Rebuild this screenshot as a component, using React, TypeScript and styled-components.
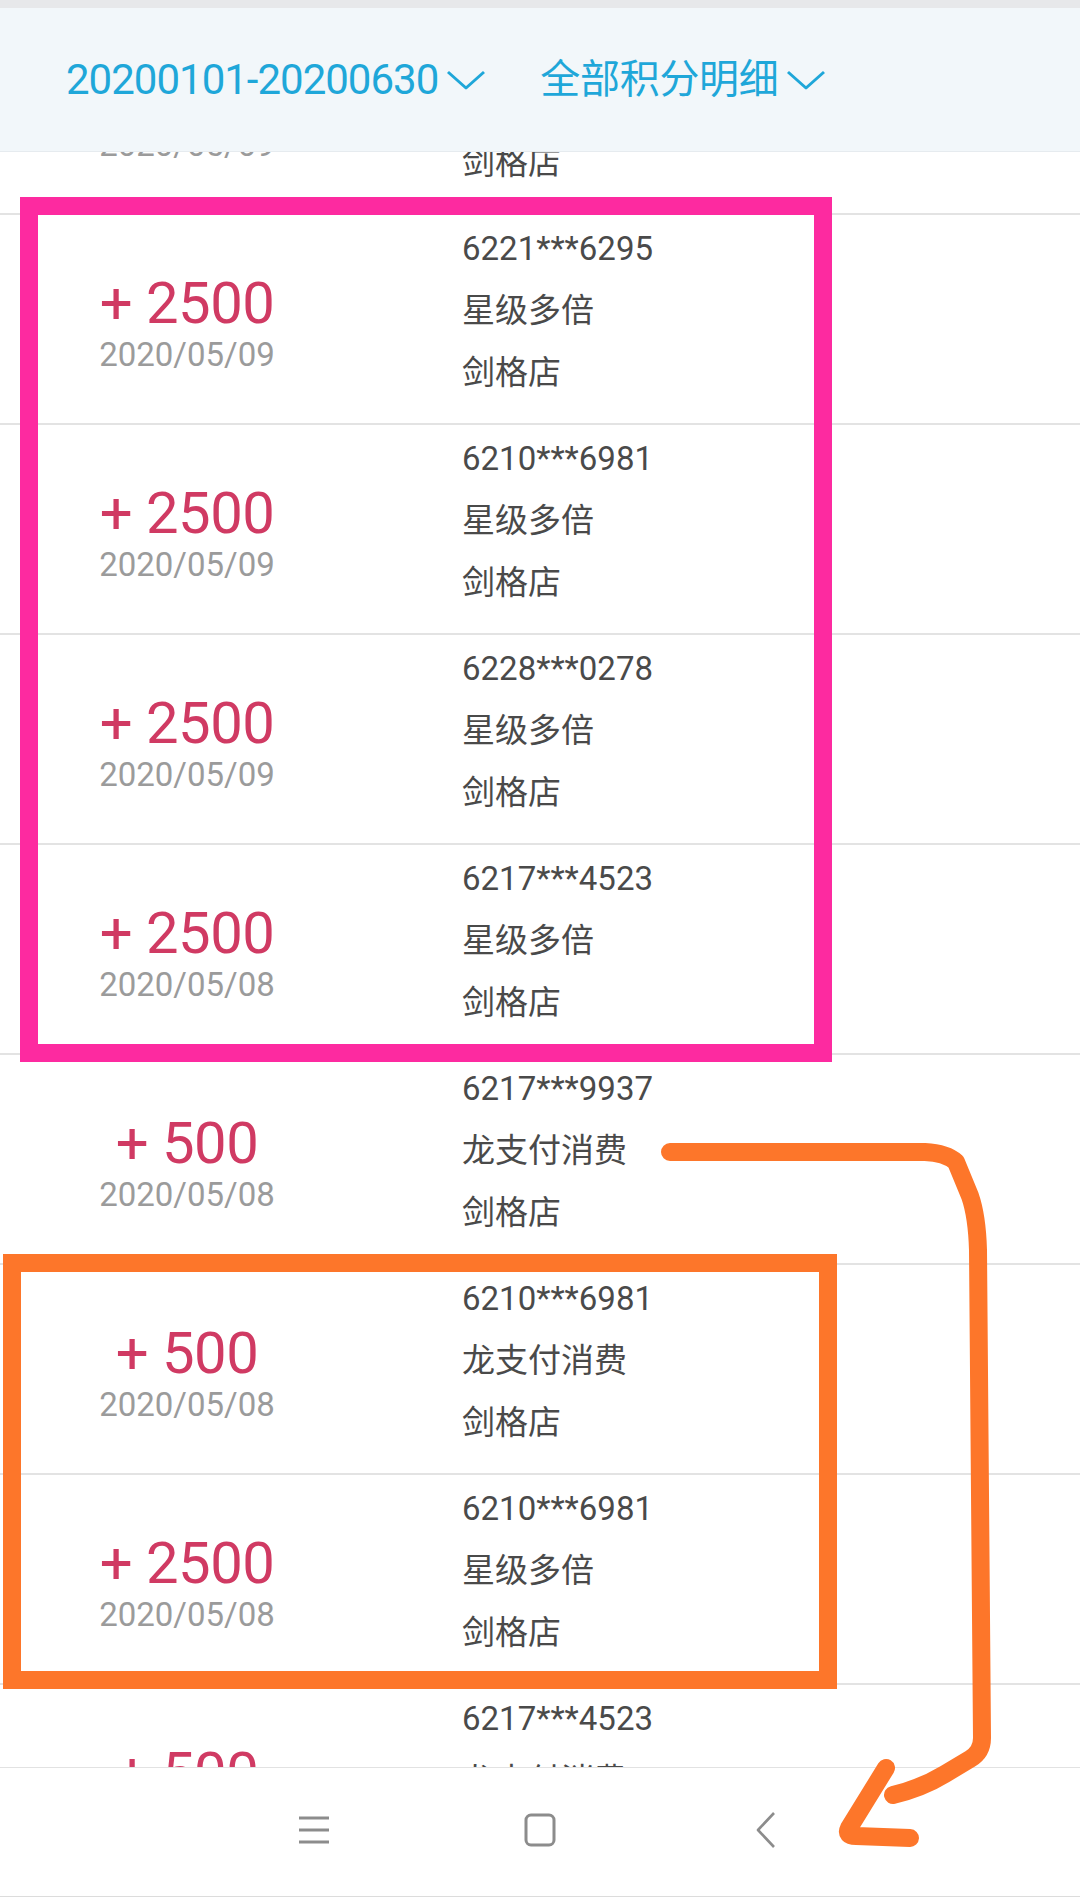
import React from "react";
import styled, {createGlobalStyle} from "styled-components";

const GlobalStyle = createGlobalStyle`
  html, body {
    margin: 0;
    padding: 0;
    background: #ffffff;
  }
  body {
    font-family: Roboto, "Noto Sans CJK SC", sans-serif;
  }
`;

type Record = {
  amount: string;
  date: string;
  card: string;
  kind: string;
  shop: string;
};

const records: Record[] = [
  {amount: "+ 2500", date: "2020/05/09", card: "6217***4523", kind: "星级多倍", shop: "剑格店"},
  {amount: "+ 2500", date: "2020/05/09", card: "6221***6295", kind: "星级多倍", shop: "剑格店"},
  {amount: "+ 2500", date: "2020/05/09", card: "6210***6981", kind: "星级多倍", shop: "剑格店"},
  {amount: "+ 2500", date: "2020/05/09", card: "6228***0278", kind: "星级多倍", shop: "剑格店"},
  {amount: "+ 2500", date: "2020/05/08", card: "6217***4523", kind: "星级多倍", shop: "剑格店"},
  {amount: "+ 500", date: "2020/05/08", card: "6217***9937", kind: "龙支付消费", shop: "剑格店"},
  {amount: "+ 500", date: "2020/05/08", card: "6210***6981", kind: "龙支付消费", shop: "剑格店"},
  {amount: "+ 2500", date: "2020/05/08", card: "6210***6981", kind: "星级多倍", shop: "剑格店"},
  {amount: "+ 500", date: "2020/05/08", card: "6217***4523", kind: "龙支付消费", shop: "剑格店"},
];

const Chevron = () => (
  <svg width="40" height="20" viewBox="0 0 40 20">
    <polyline points="2,2 20,18 38,2" fill="none" stroke="#1fa7d9" strokeWidth="3" strokeLinejoin="round" />
  </svg>
);

const MenuIcon = () => (
  <svg width="34" height="30" viewBox="0 0 34 30">
    <g stroke="#8c8c8c" strokeWidth="3">
      <line x1="2" y1="3" x2="32" y2="3" />
      <line x1="2" y1="15" x2="32" y2="15" />
      <line x1="2" y1="27" x2="32" y2="27" />
    </g>
  </svg>
);

const HomeIcon = () => (
  <svg width="34" height="36" viewBox="0 0 34 36">
    <rect x="3" y="3" width="28" height="30" rx="5" fill="none" stroke="#8c8c8c" strokeWidth="3" />
  </svg>
);

const BackIcon = () => (
  <svg width="22" height="38" viewBox="0 0 22 38">
    <polyline points="19,2 3,19 19,36" fill="none" stroke="#8c8c8c" strokeWidth="2.6" strokeLinejoin="round" />
  </svg>
);

export default function App() {
  return (
    <>
      <GlobalStyle />
      <Screen>
        <StatusStrip />
        <FilterBar>
          <FilterItem>
            <FilterLabel $digits>20200101-20200630</FilterLabel>
            <Chevron />
          </FilterItem>
          <FilterItem>
            <FilterLabel>全部积分明细</FilterLabel>
            <Chevron />
          </FilterItem>
        </FilterBar>
        <Viewport>
          <List $offset={147}>
            {records.map((r, i) => (
              <Row key={i}>
                <PointsCell>
                  <Amount>{r.amount}</Amount>
                  <DateText>{r.date}</DateText>
                </PointsCell>
                <InfoCell>
                  <InfoLine>{r.card}</InfoLine>
                  <InfoLine>{r.kind}</InfoLine>
                  <InfoLine>{r.shop}</InfoLine>
                </InfoCell>
              </Row>
            ))}
          </List>
        </Viewport>
        <NavBar>
          <NavButton><MenuIcon /></NavButton>
          <NavButton><HomeIcon /></NavButton>
          <NavButton><BackIcon /></NavButton>
        </NavBar>

        {/* hand-drawn markup on top of the screenshot */}
        <Markup width="1080" height="1897" viewBox="0 0 1080 1897">
          <rect x="29" y="206" width="794" height="847" fill="none" stroke="#fd2aa0" strokeWidth="18" />
          <rect x="12" y="1263" width="816" height="417" fill="none" stroke="#fd762a" strokeWidth="18" />
          <path
            d="M 670 1152 L 925 1152 Q 946 1153 956 1162 L 970 1196 Q 977 1216 978 1250 L 982 1738 Q 982 1752 970 1759 L 945 1774 Q 922 1788 893 1795"
            fill="none"
            stroke="#fd762a"
            strokeWidth="18"
            strokeLinecap="round"
            strokeLinejoin="round"
          />
          <path
            d="M 886 1768 L 849 1828 Q 845 1836 856 1836 L 910 1838"
            fill="none"
            stroke="#fd762a"
            strokeWidth="18"
            strokeLinecap="round"
            strokeLinejoin="round"
          />
        </Markup>
      </Screen>
    </>
  );
}

const Screen = styled.div`
  position: relative;
  width: 1080px;
  height: 1897px;
  display: flex;
  flex-direction: column;
  overflow: hidden;
  background: #ffffff;
`;

const StatusStrip = styled.div`
  height: 8px;
  background: #e7e8ea;
  flex-shrink: 0;
`;

const FilterBar = styled.div`
  height: 143px;
  flex-shrink: 0;
  display: flex;
  align-items: center;
  gap: 54px;
  padding-left: 66px;
  background: #f2f7fa;
  border-bottom: 1px solid #e6ebef;
`;

const FilterItem = styled.div`
  display: flex;
  align-items: center;
  gap: 8px;
`;

const FilterLabel = styled.span<{$digits?: boolean}>`
  color: #1fa7d9;
  font-size: ${(p) => (p.$digits ? "42px" : "40px")};
  letter-spacing: ${(p) => (p.$digits ? "-1px" : "-0.3px")};
  line-height: 1;
`;

const Viewport = styled.div`
  flex: 1;
  overflow: hidden;
`;

const List = styled.div<{$offset: number}>`
  margin-top: -${(p) => p.$offset}px;
`;

const Row = styled.div`
  height: 210px;
  box-sizing: border-box;
  display: grid;
  grid-template-columns: 374px 1fr;
  border-bottom: 2px solid #e3e3e3;
`;

const PointsCell = styled.div`
  display: flex;
  flex-direction: column;
  align-items: center;
  padding-top: 54px;
`;

const Amount = styled.div`
  color: #d03a63;
  font-size: 58px;
  line-height: 68px;
  letter-spacing: -0.5px;
`;

const DateText = styled.div`
  color: #9b9b9b;
  font-size: 33px;
  line-height: 36px;
`;

const InfoCell = styled.div`
  padding-top: 3px;
  padding-left: 88px;
`;

const InfoLine = styled.div`
  color: #4a4a4a;
  font-size: 33px;
  line-height: 62px;
`;

const NavBar = styled.div`
  height: 130px;
  box-sizing: border-box;
  flex-shrink: 0;
  display: flex;
  align-items: center;
  justify-content: center;
  gap: 192px;
  padding-bottom: 4px;
  background: #ffffff;
  border-top: 1px solid #e2e2e2;
  border-bottom: 1px solid #dcdcdc;
`;

const NavButton = styled.div`
  width: 34px;
  display: flex;
  justify-content: center;
`;

const Markup = styled.svg`
  position: absolute;
  left: 0;
  top: 0;
  pointer-events: none;
`;
